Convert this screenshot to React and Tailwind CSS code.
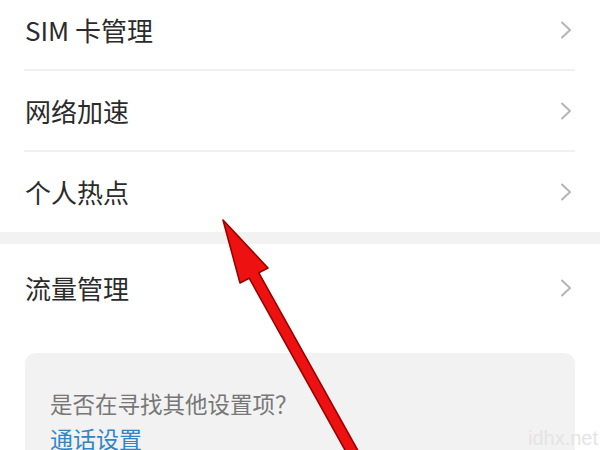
import React from "react";

function Chevron() {
  return (
    <svg width="14" height="20" viewBox="0 0 14 20" fill="none">
      <path d="M3 2.5 L11 10 L3 17.5" stroke="#b5b5b5" strokeWidth="2" strokeLinecap="round" strokeLinejoin="round" />
    </svg>
  );
}

function Row({ label, h }) {
  return (
    <div className={`flex items-center justify-between pl-[25px] pr-[27px] ${h}`}>
      <span className="text-[26px] leading-[34px] text-[#2b2b2b]">{label}</span>
      <Chevron />
    </div>
  );
}

function Divider() {
  return <div className="h-[2px] ml-[24px] mr-[25px] bg-[#f0f0f0]" />;
}

export default function App() {
  return (
    <div
      className="relative w-[600px] h-[450px] overflow-hidden bg-white"
      style={{ fontFamily: '"Noto Sans CJK SC", "Noto Sans", sans-serif' }}
    >
      <div className="flex flex-col mt-[-9px]">
        <Row label="SIM 卡管理" h="h-[78px]" />
        <Divider />
        <Row label="网络加速" h="h-[79px]" />
        <Divider />
        <Row label="个人热点" h="h-[80px]" />
        <div className="h-[12px] bg-[#f2f2f2]" />
        <Row label="流量管理" h="h-[88px]" />
        <div className="mt-[21px] mx-[25px] h-[140px] rounded-[10px] bg-[#f2f2f2] pl-[25px] pt-[34px]">
          <div className="text-[22.5px] leading-[32px] text-[#777777]">是否在寻找其他设置项？</div>
          <div className="mt-[3px] text-[23px] leading-[32px] text-[#2f86c8]">通话设置</div>
        </div>
      </div>

      <div
        className="absolute right-[2px] bottom-[-3px] text-[20px] text-[#e4e4e4]"
        style={{ fontFamily: '"Liberation Sans", sans-serif' }}
      >
        idhx.net
      </div>

      <svg className="absolute left-0 top-0" width="600" height="450" viewBox="0 0 600 450">
        <polygon
          points="223,220 268,268 258.8,272.8 370.8,473.6 361.2,479 249.2,278.2 240,283"
          fill="#ee1111"
          stroke="#9a0000"
          strokeWidth="1.6"
          strokeLinejoin="round"
        />
      </svg>
    </div>
  );
}
